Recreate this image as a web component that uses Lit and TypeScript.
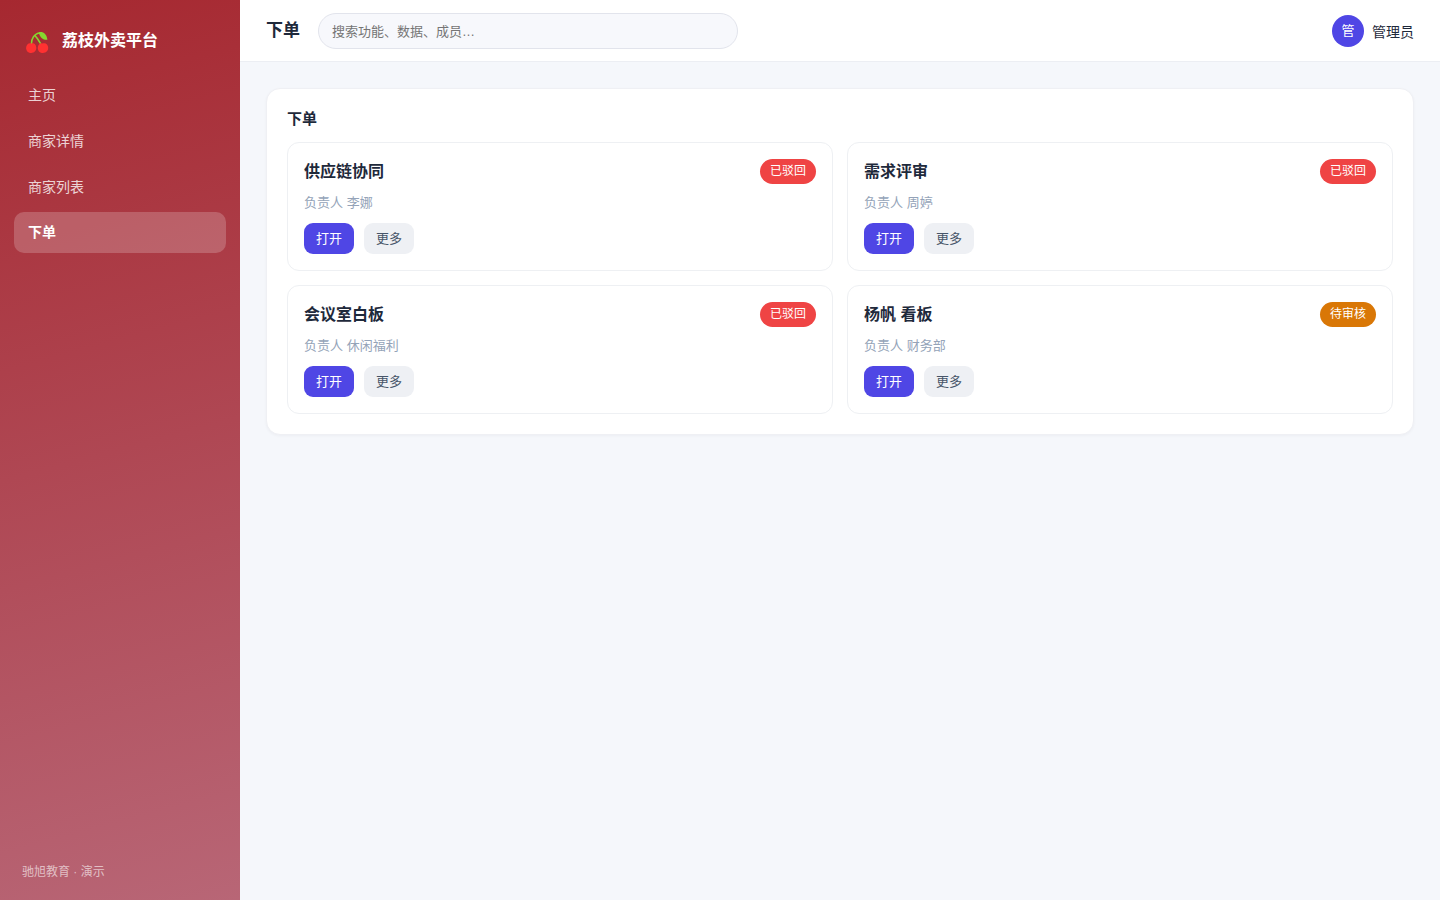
import { LitElement, html, css } from "lit";
import { customElement, property, state } from "lit/decorators.js";
import { classMap } from "lit/directives/class-map.js";

interface Task {
  name: string;
  owner: string;
  status: string;
  tone: "danger" | "warning";
}

const TASKS: Task[] = [
  { name: "供应链协同", owner: "李娜", status: "已驳回", tone: "danger" },
  { name: "需求评审", owner: "周婷", status: "已驳回", tone: "danger" },
  { name: "会议室白板", owner: "休闲福利", status: "已驳回", tone: "danger" },
  { name: "杨帆 看板", owner: "财务部", status: "待审核", tone: "warning" },
];

const PAGES = ["主页", "商家详情", "商家列表", "下单"];

@customElement("task-card")
class TaskCard extends LitElement {
  @property({ attribute: false }) task!: Task;

  static styles = css`
    :host {
      display: block;
      box-sizing: border-box;
      padding: 16px;
      border: 1px solid #eef0f3;
      border-radius: 12px;
      background: #fff;
    }
    .head {
      display: flex;
      justify-content: space-between;
      align-items: flex-start;
    }
    .name {
      margin: 0;
      font-size: 16px;
      line-height: 26px;
      font-weight: 700;
    }
    .badge {
      padding: 0 10px;
      border-radius: 999px;
      font-size: 12px;
      line-height: 25px;
      color: #fff;
    }
    .danger {
      background: #ef4444;
    }
    .warning {
      background: #d97706;
    }
    .owner {
      margin: 8px 0 10px;
      font-size: 13px;
      line-height: 20px;
      color: #94a3b8;
    }
    .actions {
      display: flex;
      gap: 10px;
    }
    .btn {
      padding: 0 12px;
      border: 0;
      border-radius: 9px;
      font: inherit;
      font-size: 13px;
      line-height: 31px;
      background: #eef0f4;
      color: #475569;
      cursor: pointer;
    }
    .primary {
      background: #4f46e5;
      color: #fff;
    }
  `;

  render() {
    const t = this.task;
    return html`
      <div class="head">
        <h3 class="name">${t.name}</h3>
        <span class="badge ${t.tone}">${t.status}</span>
      </div>
      <p class="owner">负责人 ${t.owner}</p>
      <div class="actions">
        <button type="button" class="btn primary">打开</button>
        <button type="button" class="btn">更多</button>
      </div>
    `;
  }
}

@customElement("app-root")
class AppRoot extends LitElement {
  @state() private current = "下单";

  static styles = css`
    :host {
      display: grid;
      grid-template-columns: 240px minmax(0, 1fr);
      min-height: 100vh;
      background: #f5f7fb;
      color: #1e293b;
      font-family: "Liberation Sans", "Noto Sans CJK SC", sans-serif;
      font-size: 14px;
    }
    .sidebar {
      display: flex;
      flex-direction: column;
      box-sizing: border-box;
      padding: 22px 14px 18px;
      background: linear-gradient(165deg, #a62830, #b86676);
      color: #fff;
    }
    .brand {
      display: flex;
      align-items: center;
      gap: 12px;
      padding: 0 12px 14px;
      font-size: 16px;
      line-height: 38px;
      font-weight: 700;
    }
    .logo {
      width: 24px;
      height: 24px;
      padding-top: 2px;
    }
    .nav {
      display: flex;
      flex-direction: column;
      gap: 4px;
      flex: 1;
    }
    .link {
      padding: 0 14px;
      border-radius: 10px;
      line-height: 42px;
      color: rgba(255, 255, 255, 0.8);
      text-decoration: none;
    }
    .active {
      background: rgba(255, 255, 255, 0.2);
      color: #fff;
      font-weight: 700;
      line-height: 41px;
    }
    .foot {
      padding: 0 8px;
      font-size: 12px;
      line-height: 20px;
      color: rgba(255, 255, 255, 0.6);
    }
    .topbar {
      display: flex;
      align-items: center;
      gap: 18px;
      padding: 13px 26px 12px;
      border-bottom: 1px solid #eceef3;
      background: #fff;
    }
    .title {
      margin: 0;
      font-size: 17px;
      line-height: 36px;
      font-weight: 700;
    }
    .search {
      box-sizing: border-box;
      flex: 0 1 420px;
      min-width: 0;
      height: 36px;
      padding: 0 13px;
      border: 1px solid #e2e4ec;
      border-radius: 999px;
      background: #f7f8fc;
      color: inherit;
      font: inherit;
      font-size: 13px;
    }
    .search::placeholder {
      color: #757575;
    }
    .user {
      display: flex;
      align-items: center;
      gap: 8px;
      margin-left: auto;
    }
    .avatar {
      width: 32px;
      border-radius: 50%;
      background: #4f46e5;
      color: #fff;
      font-size: 13px;
      line-height: 32px;
      text-align: center;
    }
    .main {
      padding: 26px;
    }
    .panel {
      padding: 20px;
      border: 1px solid #eff0f4;
      border-radius: 14px;
      background: #fff;
      box-shadow: 0 1px 3px rgba(15, 23, 42, 0.04);
    }
    .heading {
      margin: 0 0 14px;
      font-size: 15px;
      line-height: 19px;
      font-weight: 700;
    }
    .grid {
      display: grid;
      grid-template-columns: repeat(2, minmax(0, 1fr));
      gap: 14px;
    }
  `;

  render() {
    return html`
      <aside class="sidebar">
        <div class="brand">
          <svg class="logo" viewBox="0 0 24 24" aria-hidden="true">
            <path d="M5.4 14C5.4 9 8 3.4 14 3M9 5.6C10.8 7.4 12.6 10 14.6 13.6" fill="none" stroke="#86d72f" stroke-width="1.5" />
            <path d="M12.8 2.2C17 1.2 20.6 3.6 21.4 9.8C17.2 10.2 13.6 7.4 12.8 2.2Z" fill="#86d72f" />
            <path d="M5.4 13.6C7.4 12.2 10.3 14 10.3 17.8C10.3 21 8 23 5.3 23C2.4 23 0.1 21 0.1 18C0.1 14 3.6 12.2 5.4 13.6Z" fill="#ff3131" />
            <path d="M16.8 13.6C18.8 12.2 22.2 14 22.2 17.8C22.2 21 19.8 23 17 23C14 23 11.8 21 11.8 18C11.8 14 15 12.4 16.8 13.6Z" fill="#ff3131" />
          </svg>
          <span>荔枝外卖平台</span>
        </div>
        <nav class="nav">
          ${PAGES.map(
            (p) => html`<a
              href="#"
              class=${classMap({ link: true, active: p === this.current })}
              @click=${(e: Event) => {
                e.preventDefault();
                this.current = p;
              }}
              >${p}</a
            >`
          )}
        </nav>
        <div class="foot">驰旭教育 · 演示</div>
      </aside>
      <div class="content">
        <header class="topbar">
          <h1 class="title">${this.current}</h1>
          <input class="search" type="search" aria-label="搜索" placeholder="搜索功能、数据、成员…" />
          <div class="user">
            <span class="avatar">管</span>
            <span>管理员</span>
          </div>
        </header>
        <main class="main">
          <section class="panel">
            <h2 class="heading">${this.current}</h2>
            <div class="grid">
              ${TASKS.map((t) => html`<task-card .task=${t}></task-card>`)}
            </div>
          </section>
        </main>
      </div>
    `;
  }
}
